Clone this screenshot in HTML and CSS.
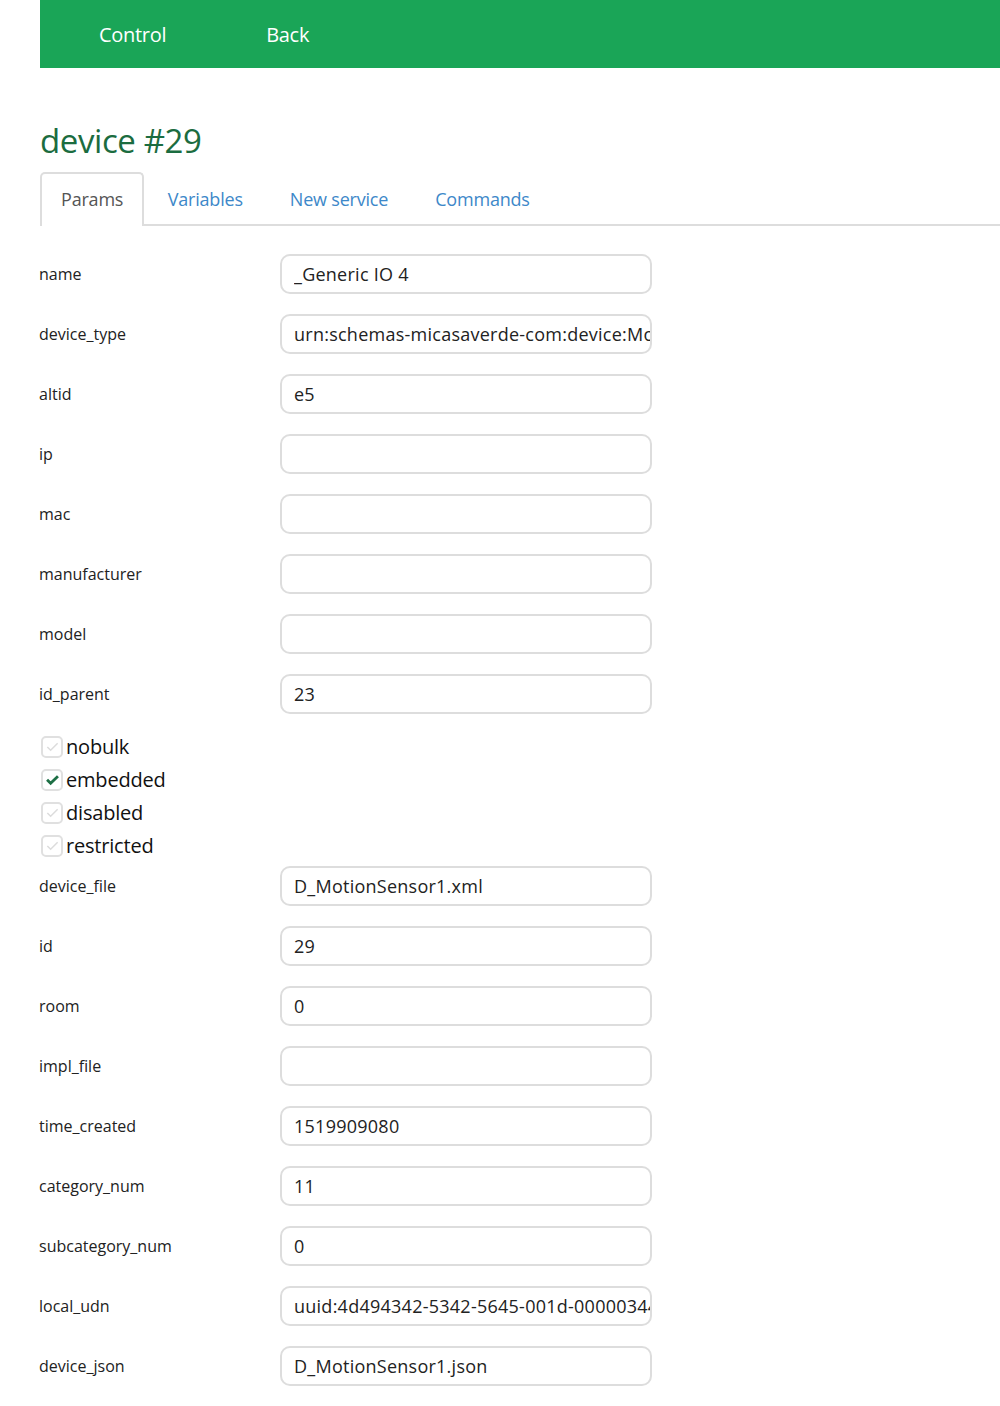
FILE: index.html
```html
<!DOCTYPE html>
<html>
<head>
<meta charset="utf-8">
<link rel="stylesheet" href="styles.css">
</head>
<body>
<header class="topbar">
  <a class="nav-link nav-first" href="#">Control</a>
  <a class="nav-link" href="#">Back</a>
</header>
<main class="content">
  <h1 class="title">device #29</h1>
  <ul class="tabs">
    <li class="tab tab-active">Params</li>
    <li class="tab">Variables</li>
    <li class="tab">New service</li>
    <li class="tab">Commands</li>
  </ul>
  <form class="form">
    <div class="row"><label class="label">name</label><input class="field" value="_Generic IO 4"></div>
    <div class="row"><label class="label">device_type</label><input class="field" value="urn:schemas-micasaverde-com:device:MotionSensor:1"></div>
    <div class="row"><label class="label">altid</label><input class="field" value="e5"></div>
    <div class="row"><label class="label">ip</label><input class="field" value=""></div>
    <div class="row"><label class="label">mac</label><input class="field" value=""></div>
    <div class="row"><label class="label">manufacturer</label><input class="field" value=""></div>
    <div class="row"><label class="label">model</label><input class="field" value=""></div>
    <div class="row"><label class="label">id_parent</label><input class="field" value="23"></div>
    <div class="checks">
      <div class="check"><span class="box"><svg viewBox="0 0 16 16" width="15" height="15"><path d="M2.5 8.5 L6 12 L13.5 4.5" fill="none" stroke="#dcdcdc" stroke-width="1.6"/></svg></span><span class="check-text">nobulk</span></div>
      <div class="check"><span class="box"><svg viewBox="0 0 16 16" width="15" height="15"><path d="M2.2 8.3 L6 12 L13.8 4.5" fill="none" stroke="#1d6f45" stroke-width="3"/></svg></span><span class="check-text">embedded</span></div>
      <div class="check"><span class="box"><svg viewBox="0 0 16 16" width="15" height="15"><path d="M2.5 8.5 L6 12 L13.5 4.5" fill="none" stroke="#dcdcdc" stroke-width="1.6"/></svg></span><span class="check-text">disabled</span></div>
      <div class="check"><span class="box"><svg viewBox="0 0 16 16" width="15" height="15"><path d="M2.5 8.5 L6 12 L13.5 4.5" fill="none" stroke="#dcdcdc" stroke-width="1.6"/></svg></span><span class="check-text">restricted</span></div>
    </div>
    <div class="row"><label class="label">device_file</label><input class="field" value="D_MotionSensor1.xml"></div>
    <div class="row"><label class="label">id</label><input class="field" value="29"></div>
    <div class="row"><label class="label">room</label><input class="field" value="0"></div>
    <div class="row"><label class="label">impl_file</label><input class="field" value=""></div>
    <div class="row"><label class="label">time_created</label><input class="field" value="1519909080"></div>
    <div class="row"><label class="label">category_num</label><input class="field" value="11"></div>
    <div class="row"><label class="label">subcategory_num</label><input class="field" value="0"></div>
    <div class="row"><label class="label">local_udn</label><input class="field" value="uuid:4d494342-5342-5645-001d-000003440000"></div>
    <div class="row"><label class="label">device_json</label><input class="field" value="D_MotionSensor1.json"></div>
  </form>
</main>
</body>
</html>
```
FILE: styles.css
```css
html, body {
  margin: 0;
  padding: 0;
  background: #fff;
  font-family: "Open Sans", "Noto Sans", sans-serif;
  color: #222;
}
.topbar {
  margin-left: 40px;
  height: 68px;
  background: #1aa557;
  display: flex;
  align-items: center;
}
.nav-link {
  color: #fff;
  text-decoration: none;
  font-size: 20px;
  letter-spacing: -0.3px;
  margin-right: 100px;
}
.nav-first {
  margin-left: 59px;
}
.content {
  padding-left: 40px;
}
.title {
  margin: 46px 0 4px 0;
  font-size: 33px;
  line-height: 54px;
  font-weight: 400;
  color: #1b6c40;
  letter-spacing: -0.4px;
}
.tabs {
  list-style: none;
  margin: 0;
  padding: 0;
  display: flex;
  border-bottom: 2px solid #dddddd;
  height: 52px;
}
.tab {
  font-size: 18px;
  color: #3d88c9;
  padding: 0 23.5px;
  line-height: 54px;
  letter-spacing: -0.2px;
}
.tab-active {
  color: #555;
  border: 2px solid #dddddd;
  border-bottom: none;
  border-radius: 5px 5px 0 0;
  padding: 0 19px 0 19px;
  line-height: 50px;
  height: 52px;
  background: #fff;
  margin-bottom: -2px;
}
.form {
  margin-top: 28px;
  display: flex;
  flex-direction: column;
}
.row {
  display: grid;
  grid-template-columns: 240px 372px;
  align-items: center;
  height: 40px;
  margin-bottom: 20px;
}
.label {
  font-size: 16px;
  color: #222;
  margin-left: -1px;
}
.field {
  box-sizing: border-box;
  width: 372px;
  height: 40px;
  border: 2px solid #dddddd;
  border-radius: 10px;
  padding: 0 0 1px 12px;
  font-family: "Open Sans", "Noto Sans", sans-serif;
  font-size: 18px;
  letter-spacing: 0.25px;
  color: #222;
  outline: none;
  background: #fff;
}
.checks {
  margin-top: -4px;
  margin-bottom: 4px;
  display: flex;
  flex-direction: column;
}
.check {
  height: 33px;
  display: flex;
  align-items: center;
}
.box {
  box-sizing: border-box;
  width: 22px;
  height: 22px;
  border: 2px solid #e0e0e0;
  border-radius: 5px;
  margin-left: 1px;
  margin-right: 3px;
  display: flex;
  align-items: center;
  justify-content: center;
}
.check-text {
  font-size: 20px;
  color: #111;
  letter-spacing: -0.2px;
}
```
